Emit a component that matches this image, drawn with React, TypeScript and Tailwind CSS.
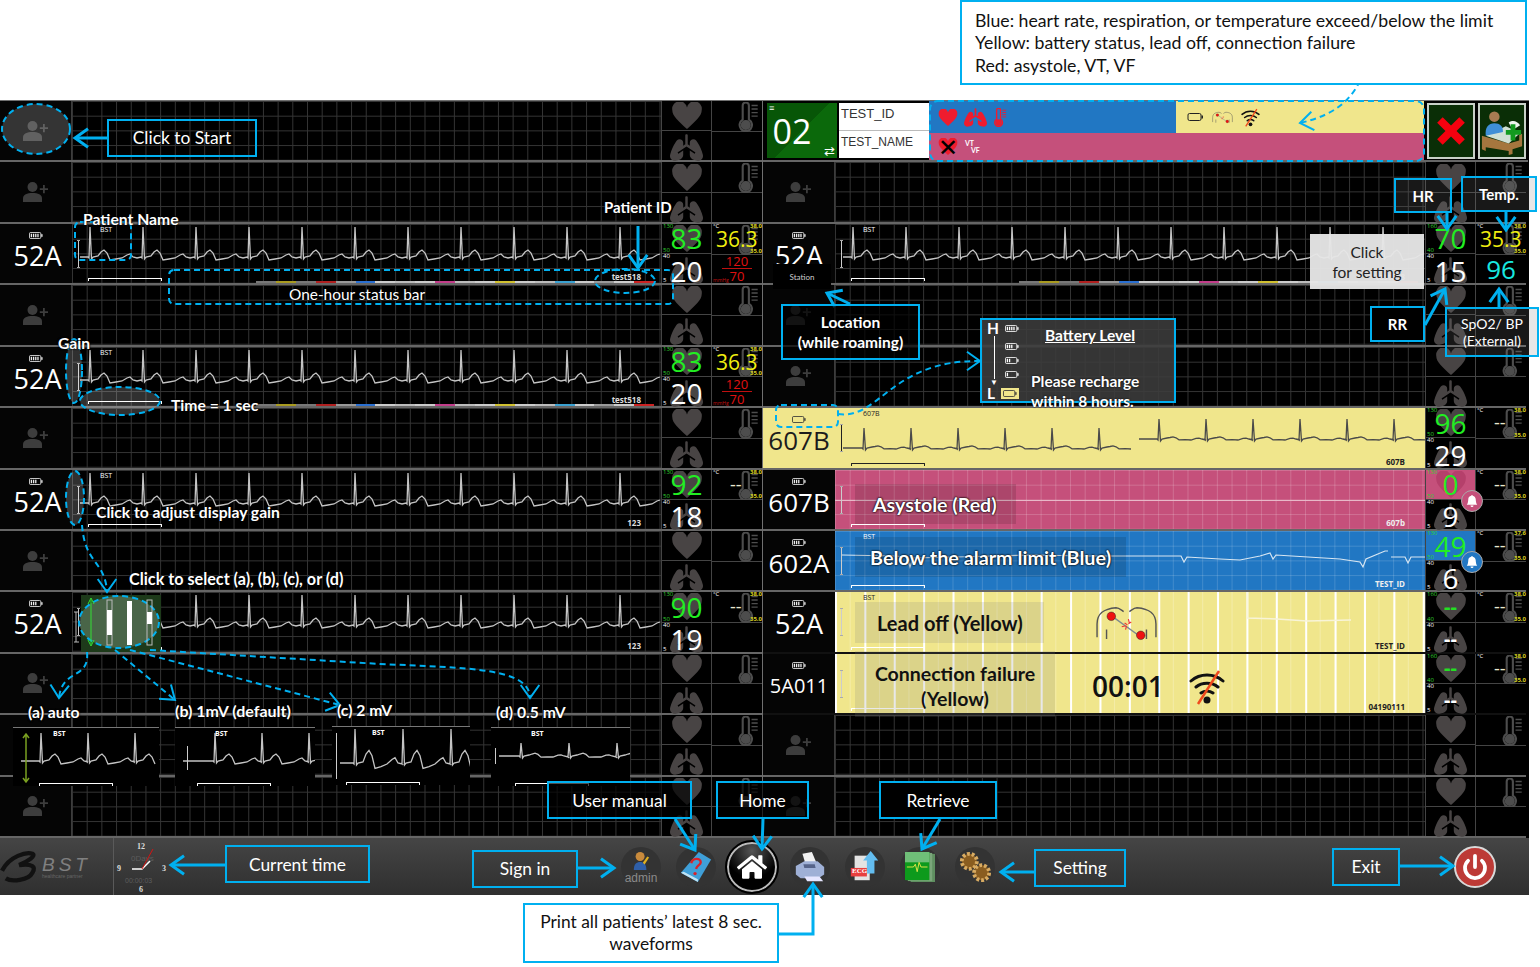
import { BsBellFill } from "react-icons/bs";
import { FaHome, FaLungs } from "react-icons/fa";

type Tone = "dark" | "pink" | "blue" | "yellow" | "yellowLines";

interface BedData {
  label: string;
  level: number;
  hr?: string;
  rr?: string;
  temp?: string;
  bp?: [string, string];
  spo2?: string;
  hrMax?: string;
  hrMin?: string;
  hrDim?: boolean;
  tempMax?: string;
  tempMin?: string;
  id?: string;
  name?: string;
  status?: boolean;
  tone?: Tone;
  labelTone?: boolean;
  hrTone?: "pink" | "blue";
  wave?: "ecg" | "flat" | "low" | "blue" | "off" | "none";
  labelSize?: string;
}

const screenFont = "font-['Open_Sans',sans-serif]";

const gridByTone: Record<Tone, string> = {
  dark: "bg-black bg-[linear-gradient(#343434_1px,transparent_1px),linear-gradient(90deg,#343434_1px,transparent_1px)] bg-size-[14.7px_14.7px]",
  pink: "bg-[#c5507b] bg-[linear-gradient(#ffffff2e_1px,transparent_1px),linear-gradient(90deg,#ffffff2e_1px,transparent_1px)] bg-size-[14.7px_14.7px]",
  blue: "bg-[#2177c3] bg-[linear-gradient(#ffffff26_1px,transparent_1px),linear-gradient(90deg,#ffffff26_1px,transparent_1px)] bg-size-[14.7px_14.7px]",
  yellow: "bg-[#f0e68c]",
  yellowLines:
    "bg-[#f0e68c] bg-[linear-gradient(90deg,#ffffff_2px,transparent_2px),linear-gradient(90deg,#ffffff40_1px,transparent_1px)] bg-size-[29.4px_100%,14.7px_100%]",
};

const statusSegments = [
  "bg-[#777]", "bg-[#a89a20]", "bg-[#777]", "bg-[#b02020]", "bg-[#999]", "bg-[#2a6fd0]", "bg-[#ccc]", "bg-[#bbb]",
  "bg-[#ccc]", "bg-[#c23d8a]", "bg-[#bbb]", "bg-[#ccc]", "bg-[#d0c030]", "bg-[#ccc]", "bg-[#bbb]", "bg-[#3aa0d0]",
  "bg-[#ccc]", "bg-[#999]", "bg-[#ccc]", "bg-[#c22]",
];

const ecgPath = (
  width: number,
  period: number,
  baseline: number,
  height: number,
  tScale = 1,
  start = 18,
) => {
  let d = `M8 ${baseline}`;
  const b = baseline;
  for (let s = start; s < width; s += period) {
    const t = tScale;
    const pts: [number, number][] = [
      [s - 2, b],
      [s - 1, b + 1],
      [s, b - height],
      [s + 1.5, b + 2],
      [s + 3, b],
      [s + 8, b - 1],
      [s + 11, b - 5 * t],
      [s + 14, b - 7 * t],
      [s + 17, b - 4 * t],
      [s + 20, b + 3 * t],
      [s + 26, b + 2 * t],
      [s + 32, b + 1],
      [s + 37, b - 2 * t],
      [s + 40, b - 3 * t],
      [s + 43, b],
      [s + 47, b + 1],
    ];
    pts.forEach(([x, y]) => {
      if (x < width) d += ` L${x} ${y}`;
    });
  }
  return d;
};

const Ecg = ({
  width = 590,
  period = 53,
  baseline = 33,
  height = 30,
  tScale = 1,
  start = 18,
  color = "#c4c4c4",
}: {
  width?: number;
  period?: number;
  baseline?: number;
  height?: number;
  tScale?: number;
  start?: number;
  color?: string;
}) => (
  <svg className="absolute inset-0 size-full" fill="none">
    <path d={ecgPath(width, period, baseline, height, tScale, start)} stroke={color} strokeWidth="1.300" />
  </svg>
);

const PersonPlus = ({ className = "w-[25px] h-[20px] text-[#3d3d3d]" }: { className?: string }) => (
  <svg viewBox="0 0 25 20" className={className} fill="currentColor">
    <circle cx="9.500" cy="5" r="5" />
    <path d="M0 20v-3.500C0 12.500 4 11 9.500 11s9.500 1.500 9.500 5.500V20z" />
    <path d="M20 3h1.800v3.200H25V8h-3.200v3.200H20V8h-3.200V6.200H20z" />
  </svg>
);

const HeartIcon = ({ className = "" }: { className?: string }) => (
  <svg viewBox="0 0 24 22" className={className} fill="currentColor">
    <path d="M12 22C5 15.500 0 11.500 0 6.500A6 6 0 0 1 12 4.500 6 6 0 0 1 24 6.500C24 11.500 19 15.500 12 22z" />
  </svg>
);

const Thermo = ({ color = "#4d4d4d", className = "w-[24px] h-[30px]" }: { color?: string; className?: string }) => (
  <svg viewBox="0 0 24 34" className={className} fill="none" stroke={color} strokeWidth="2.400">
    <path d="M6 4a3.500 3.500 0 0 1 7 0v16a7 7 0 1 1-7 0z" />
    <circle cx="9.500" cy="26" r="4.500" fill={color} />
    <path d="M16 4h7M16 8h7M16 12h7M16 16h7" strokeWidth="1.600" />
  </svg>
);

const Battery = ({ level = 4, className = "", tone = "white" }: { level?: number; className?: string; tone?: string }) => (
  <svg viewBox="0 0 16 8" className={`h-[7px] w-[14px] ${className}`} fill={tone} stroke={tone} strokeWidth="1">
    <rect x="0.500" y="0.500" width="13" height="7" rx="1.500" fill="none" />
    <rect x="14" y="2.500" width="1.500" height="3" stroke="none" />
    {[2, 4.500, 7, 9.500].slice(0, level).map((x) => (
      <rect key={x} x={x} y="2" width="1.500" height="4" stroke="none" />
    ))}
  </svg>
);

const WifiOff = ({ className = "" }: { className?: string }) => (
  <svg viewBox="0 0 36 36" className={className} fill="none">
    <g stroke="#111" strokeWidth="3" strokeLinecap="round">
      <path d="M2 12c9-8 23-8 32 0M7 18c6-5 16-5 22 0M12 24c3.500-2.500 8.500-2.500 12 0" />
    </g>
    <circle cx="18" cy="31" r="3.500" fill="#111" />
    <path d="M30 2 9 35" stroke="#f04a1d" strokeWidth="2.500" />
  </svg>
);

const Torso = ({ className = "" }: { className?: string }) => (
  <svg viewBox="0 0 66 40" className={className} fill="none">
    <path
      d="M2 36V22C2 10 10 6 22 5c3 0 5 2 8 4M64 36V22C64 10 56 6 44 5c-3 0-5 2-8 4M12 28v10M54 28v10"
      stroke="#555"
      strokeWidth="1.500"
    />
    <path d="M18 14 47 35" stroke="#7d8a90" strokeWidth="1.500" />
    <circle cx="17" cy="14" r="4.500" fill="#ee1111" stroke="#222" strokeWidth="0.500" />
    <circle cx="48" cy="34" r="4.500" fill="#ee1111" stroke="#222" strokeWidth="0.500" />
    <path d="M31 21l3 2M35 17l1 4M38 20l-3 2M28 25l4-1M32 28l1-4" stroke="#e33" strokeWidth="1.200" />
  </svg>
);

const LabelCell = ({ bed }: { bed?: BedData }) => {
  if (!bed)
    return (
      <div className="flex w-[72px] shrink-0 items-center justify-center border-r border-[#3c3c3c] bg-[#050505]">
        <PersonPlus />
      </div>
    );
  return (
    <div
      className={`flex w-[72px] shrink-0 flex-col items-center pt-[8px] ${screenFont} ${
        bed.labelTone ? "bg-[#f0e68c] text-[#1c1c1c]" : "bg-[#050505] text-white"
      }`}
    >
      <Battery level={bed.level} tone={bed.labelTone ? "#333" : "#eee"} />
      <span className={`leading-[34px] ${bed.labelSize ?? "text-[27px]"}`}>{bed.label}</span>
    </div>
  );
};

const WaveCell = ({ bed }: { bed?: BedData }) => {
  const tone = bed?.tone ?? "dark";
  const ink = tone === "yellow" || tone === "yellowLines" ? "#222" : "#fff";
  const bar = tone === "yellow" ? "#222" : "#fff";
  return (
    <div className={`relative min-w-0 flex-1 overflow-hidden ${gridByTone[tone]}`}>
      {bed && (
        <>
          {bed.wave === "ecg" && <Ecg />}
          {bed.wave === "low" && (
            <>
              <div className="absolute inset-y-0 left-0 w-[296px] overflow-hidden">
                <Ecg period={47} baseline={40} height={20} tScale={0.3} start={29} color="#4a4a4a" />
              </div>
              <div className="absolute inset-y-0 left-[296px] right-0">
                <Ecg period={47} baseline={31} height={20} tScale={0.3} start={28} color="#4a4a4a" />
              </div>
            </>
          )}
          {bed.wave === "flat" && <div className="mt-[30px] h-px bg-[#e8b8c8]" />}
          {bed.wave === "blue" && (
            <svg className="absolute inset-0 size-full" fill="none" stroke="#d7e6f2" strokeWidth="1.200">
              <path d="M7 24 60 25 72 26 75 36 78 27 120 26 200 24 250 25 340 25 346 25 349 31 352 26 385 28 405 29 425 25 435 22 438 28 441 24 505 28 525 31 528 36 531 28 550 20 553 20M556 26H570L573 32 576 26H590" />
            </svg>
          )}
          {bed.wave === "off" && (
            <svg className="absolute inset-0 size-full" fill="none" stroke="#f8f4d8" strokeWidth="1.500">
              <path d="M412 0v26l30 1 30 2 44-1" />
            </svg>
          )}
          {bed.name && (
            <span className={`absolute left-[28px] top-[1px] text-[7px] leading-[9px] ${screenFont}`} style={{ color: ink }}>
              {bed.name}
            </span>
          )}
          <div className="absolute left-[5px] top-[16px] h-[28px] w-[3px] border-x-0 border-y border-[#aaa]">
            <div className="mx-auto h-full w-px" style={{ backgroundColor: tone === "yellow" ? "#222" : "#ccc" }} />
          </div>
          <div
            className="absolute bottom-[2px] left-[16px] h-[3px] w-[74px] rounded-t-[1px] border-x border-t"
            style={{ borderColor: bar }}
          />
          {bed.id && (
            <span className={`absolute bottom-[1px] right-[20px] text-[8px] font-bold leading-[10px] ${screenFont}`} style={{ color: tone === "dark" ? "#ddd" : tone === "blue" || tone === "pink" ? "#eee" : "#222" }}>
              {bed.id}
            </span>
          )}
          {bed.status && (
            <div className="absolute bottom-0 left-[184px] right-[7px] flex h-[2px]">
              {statusSegments.map((color, i) => (
                <div key={i} className={`flex-1 ${color}`} />
              ))}
            </div>
          )}
        </>
      )}
    </div>
  );
};

const HrCell = ({ bed }: { bed?: BedData }) => {
  const hrBg =
    bed?.hrTone === "pink" ? "bg-[#c5507b]" : bed?.hrTone === "blue" ? "bg-[#2177c3]" : "bg-black";
  return (
    <div className={`flex w-[50px] shrink-0 flex-col border-l border-[#444] ${screenFont}`}>
      <div className={`relative grid min-h-0 flex-1 place-items-center border-b border-[#444] ${hrBg}`}>
        <HeartIcon
          className={`col-start-1 row-start-1 h-[27px] w-[32px] ${
            bed?.hrTone === "pink" ? "text-[#b5406b]" : bed?.hrTone === "blue" ? "text-[#2177c3]" : "text-[#484444]"
          }`}
        />
        {bed?.hr && (
          <span
            className={`col-start-1 row-start-1 leading-[20px] ${
              bed.hrDim ? "text-[20px] font-bold text-[#22e022]" : "text-[28px] text-[#22ee22]"
            }`}
          >
            {bed.hr}
          </span>
        )}
        {bed?.hr && (
          <>
            <span className="absolute left-[1px] top-0 text-[6px] leading-[5px] text-[#2fd02f]">{bed.hrMax ?? "130"}</span>
            <span className="absolute bottom-0 left-[1px] text-[6px] leading-[5px] text-[#2fd02f]">{bed.hrMin ?? "50"}</span>
          </>
        )}
        {bed?.hrTone && (
          <div
            className={`absolute right-[-8px] top-[20px] z-10 flex size-[22px] items-center justify-center rounded-full border border-[#aaa] text-white ${hrBg}`}
          >
            <BsBellFill className="size-[12px]" />
          </div>
        )}
      </div>
      <div className="relative grid min-h-0 flex-1 place-items-center bg-black">
        <FaLungs className="col-start-1 row-start-1 size-[33px] text-[#484444]" />
        {bed?.rr && (
          <span
            className={`col-start-1 row-start-1 leading-[20px] text-white ${
              bed.hrDim ? "text-[20px] font-bold" : "text-[28px]"
            }`}
          >
            {bed.rr}
          </span>
        )}
        {bed?.rr && (
          <>
            <span className="absolute left-[1px] top-0 text-[6px] leading-[5px] text-white">40</span>
            <span className="absolute bottom-0 left-[1px] text-[6px] leading-[5px] text-white">5</span>
          </>
        )}
      </div>
    </div>
  );
};

const TempCell = ({ bed }: { bed?: BedData }) => (
  <div className={`flex w-[51px] shrink-0 flex-col border-l border-[#444] ${screenFont}`}>
    <div className="relative flex min-h-0 flex-1 justify-end border-b border-[#444] bg-black pr-[2px] pt-[1px]">
      <Thermo />
      {bed && (
        <>
          <span className="absolute left-[1px] top-0 text-[6px] leading-[5px] text-white">°C</span>
          <span className="absolute right-0 top-0 text-[6px] font-bold leading-[5px] text-[#d8d020]">{bed.tempMax ?? "38.0"}</span>
          <span className="absolute bottom-0 right-0 text-[6px] font-bold leading-[5px] text-[#d8d020]">{bed.tempMin ?? "35.0"}</span>
          {bed.temp ? (
            <span className="absolute left-[4px] top-[6px] text-[21px] leading-[18px] text-[#f0ee10]">{bed.temp}</span>
          ) : (
            <span className="absolute left-[18px] top-[4px] text-[18px] leading-[20px] text-[#e8e8d0]">--</span>
          )}
        </>
      )}
    </div>
    <div className="relative flex min-h-0 flex-1 flex-col items-center justify-center bg-black leading-none">
      {bed?.bp && (
        <>
          <span className="text-[13px] leading-[12px] text-[#e01010]">{bed.bp[0]}</span>
          <div className="my-[1px] h-[1px] w-[30px] shrink-0 bg-[#c01010]" />
          <span className="text-[13px] leading-[12px] text-[#e01010]">{bed.bp[1]}</span>
          <span className="absolute bottom-0 left-[1px] text-[5px] leading-[6px] text-[#c01010]">mmHg</span>
        </>
      )}
      {bed?.spo2 && <span className="text-[26px] text-[#18e8e0]">{bed.spo2}</span>}
    </div>
  </div>
);

const BedRow = ({ bed }: { bed?: BedData }) => (
  <div className={`flex min-h-0 border-b-2 ${bed?.tone === "yellowLines" ? "border-[#111]" : "border-[#666]"}`}>
    <LabelCell bed={bed} />
    <WaveCell bed={bed} />
    <HrCell bed={bed} />
    <TempCell bed={bed} />
  </div>
);

const AlarmPanel = () => (
  <div className="flex min-w-0 flex-1 flex-col">
    <div className="flex h-[32px]">
      <div className="flex w-[247px] items-center gap-[6px] bg-[#2177c3] pl-[9px]">
        <HeartIcon className="h-[17px] w-[20px] text-[#ef1c2e]" />
        <FaLungs className="size-[23px] text-[#ef1c2e]" />
        <Thermo color="#ef1c2e" className="h-[19px] w-[14px]" />
      </div>
      <div className="flex flex-1 items-center gap-[8px] bg-[#f0e68c] pl-[11px]">
        <Battery level={0} tone="#222" className="!h-[8px] !w-[17px]" />
        <Torso className="h-[14px] w-[21px]" />
        <WifiOff className="size-[19px]" />
      </div>
    </div>
    <div className="flex flex-1 items-center gap-[7px] bg-[#c5507b] pl-[9px]">
      <div className="grid place-items-center">
        <HeartIcon className="col-start-1 row-start-1 h-[17px] w-[20px] text-[#ef1c2e]" />
        <span className="col-start-1 row-start-1 text-[24px] leading-none text-black">✕</span>
      </div>
      <span className="text-[7px] font-bold leading-[7px] text-white">
        VT
        <br />
        <span className="pl-[6px]">VF</span>
      </span>
    </div>
  </div>
);

const SelectedRow = () => (
  <div className="-mr-[2px] flex min-h-0 border-b-2 border-[#666] bg-black">
    <div className={`relative my-[2px] ml-[4px] flex w-[70px] items-center justify-center bg-[linear-gradient(135deg,#075607_50%,#0b690b_50%)] pr-[20px] ${screenFont}`}>
      <span className="absolute left-[2px] top-0 text-[9px] leading-none text-white">≡</span>
      <span className="text-[34px] leading-none text-white">02</span>
      <span className="absolute bottom-0 right-[2px] text-[13px] leading-none text-white">⇄</span>
    </div>
    <div className="my-[2px] ml-[2px] flex w-[90px] flex-col gap-px bg-[#bbb] font-['Liberation_Sans',sans-serif] text-[#333]">
      <div className="flex-1 bg-white pl-[2px] text-[13px] leading-[22px]">TEST_ID</div>
      <div className="flex-1 bg-white pl-[2px] text-[12px] leading-[22px]">TEST_NAME</div>
    </div>
    <AlarmPanel />
    <div className="flex w-[104px] items-center justify-center gap-[3px]">
      <div className="flex h-[56px] w-[48px] items-center justify-center border-2 border-[#c8d0c8] bg-[#0a2e06]">
        <svg viewBox="0 0 26 26" className="size-[36px]">
          <path d="M3 7l4-4 6 6 6-6 4 4-6 6 6 6-4 4-6-6-6 6-4-4 6-6z" fill="#f5010f" />
        </svg>
      </div>
      <div className="flex h-[56px] w-[48px] items-center justify-center border-2 border-[#c8d0c8] bg-[#0a2e06]">
        <svg viewBox="0 0 46 50" className="h-[48px] w-[44px]">
          <path d="M2 30v14l4 2v-4l24 4v4l4-1v-5l10-3V28l-3 1v6l-11 3z" fill="#a5763e" />
          <path d="M6 30 27 20l15 7-12 11z" fill="#cfe0d4" />
          <path d="M30 16c5-3 9-1 12 3l-8 5z" fill="#eef3ee" />
          <circle cx="15" cy="10" r="5.500" fill="#a87b52" />
          <path d="M6 30c-1-9 3-13 9-13s9 3 9 9z" fill="#3f8fd6" />
          <path d="M27 24h5v-6h5v6h6v5h-6v6h-5v-6h-5z" fill="#129a1f" />
        </svg>
      </div>
    </div>
  </div>
);

const Callout = ({ className, children }: { className: string; children: React.ReactNode }) => (
  <div
    className={`absolute flex items-center justify-center border-2 border-[#00b0f0] text-center text-[17.400px] leading-[20px] ${className}`}
  >
    {children}
  </div>
);

const Note = ({ className, children }: { className: string; children: React.ReactNode }) => (
  <span
    className={`absolute whitespace-nowrap text-[15.700px] font-bold leading-none text-white [text-shadow:0_0_2px_#000,0_0_2px_#000] ${className}`}
  >
    {children}
  </span>
);

const Head = ({ from, tip, w }: { from: [number, number]; tip: [number, number]; w: number }) => {
  const a = Math.atan2(tip[1] - from[1], tip[0] - from[0]);
  const len = 16;
  const spread = 0.62;
  const p1 = [tip[0] - len * Math.cos(a - spread), tip[1] - len * Math.sin(a - spread)];
  const p2 = [tip[0] - len * Math.cos(a + spread), tip[1] - len * Math.sin(a + spread)];
  return <path d={`M${p1[0]} ${p1[1]}L${tip[0]} ${tip[1]}L${p2[0]} ${p2[1]}`} stroke="#00b0f0" strokeWidth={w} fill="none" />;
};

const Arrow = ({ d, from, tip, dashed }: { d: string; from: [number, number]; tip: [number, number]; dashed?: boolean }) => (
  <g>
    <path d={d} stroke="#00b0f0" strokeWidth={dashed ? 2 : 3} strokeDasharray={dashed ? "6 4" : undefined} fill="none" />
    <Head from={from} tip={tip} w={dashed ? 2 : 3} />
  </g>
);

const Dashed = ({ children }: { children: React.ReactNode }) => (
  <g stroke="#00b0f0" strokeWidth="2" strokeDasharray="6 4" fill="none">
    {children}
  </g>
);

const Annotations = () => (
  <svg className="pointer-events-none absolute inset-0 size-full">
    <rect x="81" y="595" width="80" height="57" fill="#1d3a1a" />
    <Dashed>
      <ellipse cx="36" cy="129" rx="34" ry="25" fill="#ffffff30" />
      <rect x="75" y="222" width="56" height="38" rx="5" />
      <rect x="169" y="270" width="504" height="34" rx="5" />
      <ellipse cx="625" cy="281" rx="30" ry="12" />
      <ellipse cx="74" cy="371" rx="8" ry="32" fill="#ffffff30" />
      <ellipse cx="120" cy="401" rx="40" ry="14" fill="#ffffff30" />
      <ellipse cx="75" cy="498" rx="9" ry="27" fill="#ffffff30" />
      <ellipse cx="119" cy="622" rx="40" ry="26" fill="#76907680" />
      <rect x="930" y="101" width="494" height="60" rx="8" />
      <rect x="776" y="405" width="62" height="22" rx="5" />
    </Dashed>
    <g>
      <path d="M91 600v44M88 640l3 6 3-6M88 604l3-6 3 6" stroke="#35e035" fill="none" />
      <rect x="107" y="600" width="5" height="45" fill="none" stroke="#bbb" />
      <rect x="107" y="610" width="5" height="25" fill="#fff" />
      <rect x="127" y="601" width="5" height="44" fill="#fff" />
      <rect x="147" y="600" width="5" height="45" fill="none" stroke="#bbb" />
      <rect x="147" y="612" width="5" height="12" fill="#fff" />
      <path d="M76 612v30M74 612h5M74 642h5" stroke="#bbb" fill="none" />
    </g>
    <Arrow d="M107 138H75" from={[107, 138]} tip={[75, 138]} />
    <Arrow d="M638 226V268" from={[638, 226]} tip={[638, 268]} />
    <Arrow d="M850 304 827 293" from={[850, 304]} tip={[827, 293]} />
    <Arrow d="M1447 213V229" from={[1447, 213]} tip={[1447, 229]} />
    <Arrow d="M1506 212V230" from={[1506, 212]} tip={[1506, 230]} />
    <Arrow d="M1425 325 1445 289" from={[1425, 325]} tip={[1445, 289]} />
    <Arrow d="M1499 307V289" from={[1499, 307]} tip={[1499, 289]} />
    <Arrow d="M225 865H171" from={[225, 865]} tip={[171, 865]} />
    <Arrow d="M578 868H614" from={[578, 868]} tip={[614, 868]} />
    <Arrow d="M675 819 695 850" from={[675, 819]} tip={[695, 850]} />
    <Arrow d="M763 819 762 849" from={[763, 819]} tip={[762, 849]} />
    <Arrow d="M940 819 922 849" from={[940, 819]} tip={[922, 849]} />
    <Arrow d="M1034 872H1001" from={[1034, 872]} tip={[1001, 872]} />
    <Arrow d="M1400 866H1453" from={[1400, 866]} tip={[1453, 866]} />
    <Arrow d="M779 934H813V884" from={[813, 934]} tip={[813, 884]} />
    <Arrow dashed d="M1395 50C1350 50 1380 105 1300 123" from={[1330, 118]} tip={[1300, 123]} />
    <Arrow dashed d="M838 414C880 420 890 360 980 361" from={[950, 361]} tip={[980, 361]} />
    <Arrow dashed d="M82 525C85 565 105 560 107 592" from={[107, 570]} tip={[107, 592]} />
    <Arrow dashed d="M87 652C90 680 62 668 59 698" from={[60, 680]} tip={[59, 698]} />
    <Arrow dashed d="M115 650 175 700" from={[115, 650]} tip={[175, 700]} />
    <Arrow dashed d="M130 650 340 705" from={[130, 650]} tip={[340, 705]} />
    <Arrow dashed d="M150 650 380 664C470 668 530 668 530 698" from={[530, 675]} tip={[530, 698]} />
  </svg>
);

const Inset = ({
  className,
  barClass,
  children,
  height = 28,
  tScale = 1,
  period = 47,
  baseline = 33,
  start = 28,
}: {
  className: string;
  barClass: string;
  children: React.ReactNode;
  height?: number;
  tScale?: number;
  period?: number;
  baseline?: number;
  start?: number;
}) => (
  <div className={`absolute h-[59px] overflow-hidden border-t border-[#777] bg-black ${className}`}>
    <Ecg width={145} period={period} height={height} tScale={tScale} baseline={baseline} start={start} />
    <span className={`absolute left-[40px] top-[1px] text-[7px] font-bold leading-[9px] text-white ${screenFont}`}>BST</span>
    <div className={`absolute bottom-0 h-[3px] w-[74px] rounded-t-[1px] border-x border-t border-white ${barClass}`} />
    {children}
  </div>
);

const Toolbar = () => (
  <div className="flex h-[57px] w-[1529px] items-center bg-[linear-gradient(#454545,#2f2f2f)] text-white">
    <div className="flex h-full w-[114px] items-center border-r border-[#5a5a5a]">
      <svg viewBox="0 0 44 40" className="h-[38px] w-[42px] shrink-0" fill="none" stroke="#111" strokeWidth="4.500">
        <path d="M2 24C10 8 28 4 34 6c4 2-4 8-14 12 14-2 18 2 14 8-4 8-22 10-28 6" />
      </svg>
      <div className="flex flex-col leading-none">
        <span className="font-['Liberation_Sans',sans-serif] text-[19px] italic tracking-[4px] text-[#808080]">BST</span>
        <span className="font-['Liberation_Sans',sans-serif] text-[5px] text-[#666]">healthcare partner</span>
      </div>
    </div>
    <div className="relative h-full w-[56px] font-['Liberation_Serif',serif] text-[8px] font-bold text-[#ddd]">
      <span className="absolute left-[23px] top-[3px]">12</span>
      <span className="absolute left-[3px] top-[25px]">9</span>
      <span className="absolute left-[48px] top-[25px]">3</span>
      <span className="absolute left-[25px] top-[46px]">6</span>
      <span className="absolute left-[17px] top-[15px] font-['Liberation_Sans',sans-serif] font-normal text-[#5c5c5c]">0Days</span>
      <span className="absolute left-[11px] top-[38px] font-['Liberation_Sans',sans-serif] text-[7px] font-normal text-[#5c5c5c]">00:00:03</span>
      <svg className="absolute inset-0 size-full" fill="none">
        <path d="M18 31h10l8-8" stroke="#fff" strokeWidth="1.500" />
        <path d="M28 31 39 11" stroke="#d41313" />
      </svg>
    </div>
    <div className="ml-[451px] flex items-center gap-[15px]">
      <div className="flex size-[40px] flex-col items-center justify-center rounded-full bg-[#333]">
        <svg viewBox="0 0 20 22" className="h-[22px] w-[18px]">
          <circle cx="9" cy="6" r="5" fill="#c88a3c" />
          <path d="M2 21c0-7 3-9 7-9s7 2 7 9z" fill="#2f5fa8" />
          <path d="M12 13l5-7 2 1-5 8z" fill="#e0b020" />
        </svg>
        <span className="font-['Liberation_Sans',sans-serif] text-[12px] leading-none text-[#8a8a8a]">admin</span>
      </div>
      <div className="flex size-[40px] items-center justify-center rounded-full bg-[#333]">
        <svg viewBox="0 0 36 36" className="size-[34px]">
          <path d="M2 24 21 2l13 8-14 24z" fill="#3f9fd8" />
          <path d="M2 24l18 10v-3L5 23z" fill="#bfe3f5" />
          <path d="M13 14c1-6 10-6 10-1 0 3-4 3-5 7" stroke="#d8232a" strokeWidth="2.500" fill="none" />
          <circle cx="17" cy="25" r="1.800" fill="#d8232a" />
        </svg>
      </div>
      <div className="-ml-[4px] -mr-[2px] flex size-[50px] items-center justify-center rounded-full border-2 border-[#bbb] bg-[radial-gradient(circle_at_50%_15%,#555,#000_60%)] outline-2 outline-black">
        <FaHome className="size-[30px] text-white" />
      </div>
      <div className="flex size-[40px] items-center justify-center rounded-full bg-[#333]">
        <svg viewBox="0 0 36 36" className="size-[34px]">
          <path d="M10 4l10-2 5 12H13z" fill="#f2f2f2" />
          <path d="M3 17l9-5h14l7 6v8l-6 4H8l-5-4z" fill="#9fb0d6" />
          <path d="M11 15h12l1 4H12z" fill="#56648a" />
          <path d="M12 28h16l4 5H15z" fill="#e6e6ff" />
        </svg>
      </div>
      <div className="relative flex size-[40px] items-center justify-center rounded-full bg-[#333]">
        <svg viewBox="0 0 36 36" className="size-[34px]">
          <path d="M7 6h16v26H7z" fill="#e3e3e3" />
          <path d="M24 1l8 10h-4v14h-8V11h-4z" fill="#63bdf0" />
          <rect x="3" y="19" width="17" height="9" fill="#e83f3f" />
        </svg>
        <span className="absolute left-[7px] top-[20px] font-['Liberation_Serif',serif] text-[7px] font-bold leading-[8px] text-white">ECG</span>
      </div>
      <div className="flex size-[40px] items-center justify-center rounded-full bg-[#333]">
        <svg viewBox="0 0 32 36" className="h-[34px] w-[30px]">
          <rect x="6" y="4" width="26" height="30" fill="#5f8f60" />
          <rect x="3" y="3" width="26" height="30" fill="#7aa57a" />
          <rect x="0" y="2" width="26" height="30" fill="#0d9a1c" />
          <rect x="0" y="2" width="26" height="11" fill="#6fbf78" />
          <path d="M2 18h7l2-3 2 8 2-10 2 5h7" stroke="#e6e64a" fill="none" />
        </svg>
      </div>
      <div className="flex size-[40px] items-center justify-center rounded-full bg-[#333]">
        <svg viewBox="0 0 36 36" className="size-[34px]" fill="#a9752c" stroke="#d8ab62" strokeWidth="1">
          <circle cx="12" cy="12" r="8" strokeDasharray="3 2" strokeWidth="4" fill="#8a5d20" />
          <circle cx="25" cy="24" r="8" strokeDasharray="3 2" strokeWidth="4" fill="#8a5d20" />
        </svg>
      </div>
    </div>
    <div className="ml-auto mr-[33px] flex size-[42px] items-center justify-center rounded-full border-2 border-[#d9d9d9] bg-[#bd3a36]">
      <svg viewBox="0 0 24 24" className="size-[30px]" fill="none" stroke="#fff" strokeWidth="3" strokeLinecap="round">
        <path d="M12 3v9M6.500 7a8 8 0 1 0 11 0" />
      </svg>
    </div>
  </div>
);

const leftLabel = "pl-[3px] text-[27px]";

const leftBeds: (BedData | undefined)[] = [
  undefined,
  undefined,
  { label: "52A", level: 4, hr: "83", rr: "20", temp: "36.3", bp: ["120", "70"], id: "test518", name: "BST", status: true, wave: "ecg", labelSize: leftLabel },
  undefined,
  { label: "52A", level: 4, hr: "83", rr: "20", temp: "36.3", bp: ["120", "70"], id: "test518", name: "BST", status: true, wave: "ecg", labelSize: leftLabel },
  undefined,
  { label: "52A", level: 3, hr: "92", rr: "18", id: "123", name: "BST", wave: "ecg", labelSize: leftLabel },
  undefined,
  { label: "52A", level: 3, hr: "90", rr: "19", id: "123", name: "BST", wave: "ecg", labelSize: leftLabel },
  undefined,
  undefined,
  undefined,
];

const rightBeds: (BedData | undefined)[] = [
  { label: "52A", level: 4, hr: "70", rr: "15", temp: "35.3", spo2: "96", hrMax: "160", hrMin: "40", id: "test518", name: "BST", status: true, wave: "ecg" },
  undefined,
  undefined,
  {
    label: "607B", level: 0, hr: "96", rr: "29", id: "607B", name: "607B", tone: "yellow", labelTone: true, wave: "low",
    labelSize: "text-[26px]",
  },
  {
    label: "607B", level: 3, hr: "0", rr: "9", id: "607b", tone: "pink", hrTone: "pink", wave: "flat",
    labelSize: "text-[26px]",
  },
  {
    label: "602A", level: 3, hr: "49", rr: "6", id: "TEST_ID", name: "BST", tone: "blue", hrTone: "blue", wave: "blue",
    labelSize: "text-[26px]", tempMax: "37.6",
  },
  { label: "52A", level: 3, hr: "--", rr: "--", hrDim: true, hrMax: "160", hrMin: "40", id: "TEST_ID", name: "BST", tone: "yellowLines", wave: "off" },
  {
    label: "5A011", level: 4, hr: "--", rr: "--", hrDim: true, hrMax: "160", hrMin: "40", id: "04190111", tone: "yellowLines", wave: "none",
    labelSize: "text-[20px]",
  },
  undefined,
  undefined,
];

const App = () => (
  <div className="relative h-[967px] w-[1540px] overflow-hidden bg-white pt-[100px] font-['Lato',sans-serif]">
    <div className="grid h-[738px] w-[1529px] grid-cols-[763px_766px] grid-rows-[minmax(0,1fr)] border-t border-[#707070] bg-black">
      <div className="grid min-h-0 grid-rows-[repeat(12,minmax(0,1fr))] border-r border-[#707070]">
        {leftBeds.map((bed, i) => (
          <BedRow key={i} bed={bed} />
        ))}
      </div>
      <div className="grid min-h-0 grid-rows-[repeat(12,minmax(0,1fr))] pr-[3px]">
        <SelectedRow />
        <BedRow />
        {rightBeds.map((bed, i) => (
          <BedRow key={i} bed={bed} />
        ))}
      </div>
    </div>
    <Toolbar />

    <Inset className="left-[13px] top-[727px] w-[146px]" barClass="left-[26px]">
      <svg className="absolute left-[8px] top-[5px] h-[50px] w-[10px]" fill="none" stroke="#7aa020" strokeWidth="1.500">
        <path d="M5 1v48M2 5l3-4 3 4M2 45l3 4 3-4" />
      </svg>
    </Inset>
    <Inset className="left-[175px] top-[727px] w-[140px]" barClass="left-[22px]" start={40} height={28}>
      <div className="absolute left-[12px] top-[18px] h-[24px] w-px bg-[#ccc]" />
    </Inset>
    <Inset className="left-[332px] top-[726px] w-[138px]" barClass="left-[14px]" height={34} tScale={1.800} period={48} baseline={36} start={23}>
      <div className="absolute left-[4px] top-[6px] h-[46px] w-px bg-[#ccc]" />
    </Inset>
    <Inset className="left-[491px] top-[727px] w-[139px]" barClass="left-[24px]" height={13} tScale={0.400} period={48} baseline={28} start={30}>
      <div className="absolute left-[4px] top-[20px] h-[16px] w-px bg-[#ccc]" />
    </Inset>

    <div className="absolute left-[855px] top-[484px] h-[40px] w-[161px] bg-[#00000020]" />
    <div className="absolute left-[855px] top-[537px] h-[40px] w-[271px] bg-[#00000020]" />
    <div className="absolute left-[855px] top-[602px] h-[41px] w-[189px] bg-[#8080802e]" />
    <div className="absolute left-[855px] top-[651px] h-[66px] w-[200px] bg-[#8080802e]" />
    <div className="absolute left-[773px] top-[264px] flex h-[25px] w-[58px] items-center justify-center bg-black text-[8px] text-[#ccc]">
      Station
    </div>
    <Torso className="absolute left-[1095px] top-[603px] h-[38px] w-[63px]" />
    <WifiOff className="absolute left-[1189px] top-[669px] size-[36px]" />

    <Annotations />

    <Callout className="left-[107px] top-[119px] h-[38px] w-[150px] text-white">Click to Start</Callout>
    <Callout className="left-[225px] top-[845px] h-[38px] w-[145px] pt-[2px] text-white">Current time</Callout>
    <Callout className="left-[472px] top-[850px] h-[38px] w-[106px] text-white">Sign in</Callout>
    <Callout className="left-[547px] top-[781px] h-[38px] w-[145px] bg-[#000000b0] pt-[2px] text-white">User manual</Callout>
    <Callout className="left-[716px] top-[781px] h-[38px] w-[93px] bg-[#000000b0] pt-[2px] text-white">Home</Callout>
    <Callout className="left-[879px] top-[781px] h-[38px] w-[118px] bg-black pt-[2px] text-white">Retrieve</Callout>
    <Callout className="left-[1034px] top-[849px] h-[38px] w-[92px] text-white">Setting</Callout>
    <Callout className="left-[1332px] top-[848px] h-[38px] w-[68px] text-white">Exit</Callout>
    <Callout className="left-[523px] top-[903px] h-[60px] w-[256px] bg-white leading-[22px] text-[#111]">
      Print all patients’ latest 8 sec.
      <br />
      waveforms
    </Callout>
    <Callout className="left-[960px] top-0 h-[85px] w-[567px] !justify-start bg-white pl-[13px] pt-[2px] !text-left !text-[17.700px] !leading-[22.500px] text-[#111]">
      <span>
        Blue: heart rate, respiration, or temperature exceed/below the limit
        <br />
        Yellow: battery status, lead off, connection failure
        <br />
        Red: asystole, VT, VF
      </span>
    </Callout>
    <Callout className="left-[1394px] top-[178px] h-[35px] w-[58px] bg-[#80808030] !text-[15px] font-bold text-white">HR</Callout>
    <Callout className="left-[1461px] top-[176px] h-[36px] w-[76px] bg-[#80808030] !text-[15px] font-bold text-white">Temp.</Callout>
    <Callout className="left-[1370px] top-[306px] h-[36px] w-[55px] bg-black !text-[15px] font-bold text-white">RR</Callout>
    <Callout className="left-[1445px] top-[307px] h-[50px] w-[94px] bg-[#80808030] !text-[14px] !leading-[17px] text-white">
      SpO2/ BP
      <br />
      (External)
    </Callout>
    <Callout className="left-[781px] top-[304px] h-[56px] w-[139px] bg-[#000000b0] !text-[15.500px] font-bold text-white">
      Location
      <br />
      (while roaming)
    </Callout>

    <div className="absolute left-[980px] top-[318px] flex h-[85px] w-[196px] border-2 border-[#00b0f0] bg-[#3c3c3ce0] text-[15.500px] font-bold text-white">
      <div className="flex w-[49px] flex-col pl-[5px]">
        <div className="flex items-center gap-[6px] leading-[16px]">
          H
          <Battery level={4} />
        </div>
        <div className="flex flex-1 items-center">
          <div className="flex w-[14px] flex-col items-center self-stretch">
            <div className="w-px flex-1 bg-white" />
            <span className="text-[8px] leading-[6px]">▼</span>
          </div>
          <div className="ml-[4px] flex flex-col gap-[7px]">
            <Battery level={3} />
            <Battery level={2} />
            <Battery level={1} />
          </div>
        </div>
        <div className="flex items-center gap-[6px] leading-[16px]">
          L
          <div className="flex h-[11px] w-[18px] items-center justify-center bg-[#f0e68c]">
            <Battery level={0} tone="#333" />
          </div>
        </div>
      </div>
      <div className="flex flex-col pt-[5px] leading-[20px]">
        <span className="ml-[14px] underline">Battery Level</span>
        <span className="mt-[26px] whitespace-nowrap [text-shadow:0_0_2px_#000]">Please recharge</span>
        <span className="whitespace-nowrap [text-shadow:0_0_2px_#000]">within 8 hours.</span>
      </div>
    </div>

    <div className="absolute left-[1310px] top-[234px] flex h-[55px] w-[114px] items-center justify-center bg-[#e6e6e6f5] text-center text-[15.500px] leading-[20px] text-[#222]">
      Click
      <br />
      for setting
    </div>

    <Note className="left-[83px] top-[212px]">Patient Name</Note>
    <Note className="left-[604px] top-[200px] !text-[15px]">Patient ID</Note>
    <Note className="left-[289px] top-[287px] !text-[15.400px] !font-normal">One-hour status bar</Note>
    <Note className="left-[58px] top-[336px]">Gain</Note>
    <Note className="left-[171px] top-[398px]">Time = 1 sec</Note>
    <Note className="left-[96px] top-[505px]">Click to adjust display gain</Note>
    <Note className="left-[129px] top-[571px] !text-[16.200px]">Click to select (a), (b), (c), or (d)</Note>
    <Note className="left-[28px] top-[705px]">(a) auto</Note>
    <Note className="left-[175px] top-[703px] !text-[16px]">(b) 1mV (default)</Note>
    <Note className="left-[337px] top-[703px]">(c) 2 mV</Note>
    <Note className="left-[496px] top-[705px]">(d) 0.5 mV</Note>
    <Note className="left-[873px] top-[495px] !text-[19.600px]">Asystole (Red)</Note>
    <Note className="left-[870px] top-[548px] !text-[19.800px]">Below the alarm limit (Blue)</Note>
    <span className="absolute left-[877px] top-[613px] text-[20px] font-bold leading-none text-[#111]">Lead off (Yellow)</span>
    <span className="absolute left-[855px] top-[661px] w-[200px] text-center text-[19.500px] font-bold leading-[25px] text-[#111]">
      Connection failure
      <br />
      (Yellow)
    </span>
    <span className={`absolute left-[1092px] top-[672px] text-[28px] font-semibold leading-none text-[#111] ${screenFont}`}>00:01</span>
  </div>
);

export default App;
